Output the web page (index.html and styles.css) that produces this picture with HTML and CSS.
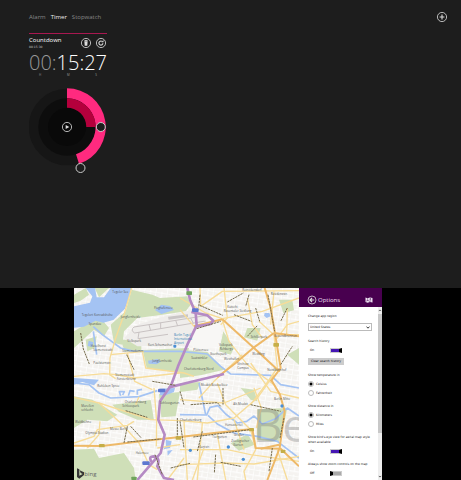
FILE: index.html
```html
<!DOCTYPE html>
<html lang="en">
<head>
  <meta charset="utf-8">
  <title>Timer and Maps</title>
  <link rel="stylesheet" href="styles.css">
</head>
<body>
  <section class="timer">
    <header class="timer__header">
      <nav class="timer__nav">
        <a class="timer__link" href="#alarm">Alarm</a>
        <a class="timer__link timer__link--active" href="#timer">Timer</a>
        <a class="timer__link" href="#stopwatch">Stopwatch</a>
      </nav>
      <button class="round-button" type="button" aria-label="Add timer">
        <svg viewBox="0 0 12 12"><circle cx="6" cy="6" r="4.6"/><path class="thick" d="M6 3.6v4.8M3.6 6h4.8"/></svg>
      </button>
    </header>

    <div class="countdown">
      <div class="countdown__top">
        <div>
          <h1 class="countdown__title">Countdown</h1>
          <div class="countdown__total">00:15:30</div>
        </div>
        <div class="countdown__buttons">
          <button class="round-button" type="button" aria-label="Delete">
            <svg viewBox="0 0 12 12"><circle cx="6" cy="6" r="4.6"/><path class="solid" d="M4.4 4.5h3.2l-.3 4.2H4.7zM4.1 3.6h3.8v.6H4.1zM5.3 3h1.4v.6H5.3z"/></svg>
          </button>
          <button class="round-button" type="button" aria-label="Reset">
            <svg viewBox="0 0 12 12"><circle cx="6" cy="6" r="4.6"/><path class="thick" d="M7.9 6.3A2 2 0 1 1 7 4.4"/><path class="solid" d="M6.3 5.2h2.2V3z"/></svg>
          </button>
        </div>
      </div>
      <div class="countdown__clock"><span class="countdown__dim">00:</span>15:27</div>
      <div class="countdown__units"><span>H</span><span>M</span><span>S</span></div>
      <div class="dial">
        <svg class="dial__rings" viewBox="-38 -39 78 86">
          <circle r="38.3" fill="#161616"/>
          <circle r="28.7" fill="#0d0d0d"/>
          <circle r="19" fill="#090909"/>
          <path d="M0-38.7A38.7 38.7 0 0 1 12 36.8L9 27.2A28.7 28.7 0 0 0 0-28.7Z" fill="#ff2a7f"/>
          <path d="M0-28.7A28.7 28.7 0 0 1 28.7 0H19.3A19.3 19.3 0 0 0 0-19.3Z" fill="#b4003c"/>
          <path d="M12 36.5L13 38.5" stroke="#ddd"/>
          <circle cx="33.8" cy="0" r="4.5" fill="#1d1d1d" stroke="#ccc"/>
          <circle cx="13.5" cy="41" r="4.5" fill="#1d1d1d" stroke="#ccc"/>
        </svg>
        <button class="round-button dial__play" type="button" aria-label="Start">
          <svg viewBox="0 0 12 12"><circle cx="6" cy="6" r="4.6"/><path class="solid" d="M4.7 3.9v4.2L8.3 6z"/></svg>
        </button>
      </div>
    </div>
  </section>

  <section class="maps">
    <svg class="map" viewBox="0 0 675 576" preserveAspectRatio="xMidYMid slice" role="img" aria-label="Map of Berlin">
      <defs>
        <pattern id="streets" width="34" height="30" patternUnits="userSpaceOnUse" patternTransform="rotate(9)">
          <path d="M0 5H34M0 20H34M8 0V30M25 0V20" fill="none" stroke="#fff" stroke-width="3"/>
          <path d="M0 7H34M10 0V30" fill="none" stroke="#ebe9e5"/>
        </pattern>
      </defs>
      <rect width="675" height="576" fill="#f5f3f0"/>
      <rect width="675" height="576" fill="url(#streets)"/>

      <!-- parks and woods -->
      <g fill="#cfdfb8">
        <path d="M173 5L235 20 258 30 340 25 350 50 335 70 255 82 190 90 150 130 145 170 120 165 110 110 155 70Z"/>
        <path d="M0 20L35 0 45 20 20 38 0 45ZM62 0L105 0 75 28ZM25 115L80 90 105 120 90 145 60 125 0 180 0 130Z"/>
        <path d="M35 155L68 145 62 180 40 190ZM140 155h62v35h-50Z"/>
        <path d="M206 186L345 180 325 255 218 240Z"/>
        <path d="M0 325L55 335 130 380 100 400 40 395 0 420Z"/>
        <path d="M115 350L230 336 240 396 190 395 135 372Z"/>
        <path d="M255 318L318 312 305 385 262 388Z"/>
        <path d="M0 485L60 482 75 510 150 495 180 540 185 576 0 576Z"/>
        <path d="M318 185L400 192 450 245 380 262 318 270Z"/>
        <path d="M448 130L480 180 470 200 435 190ZM520 120h40l-10 38-40-10Z"/>
        <path d="M550 364L640 360 632 400 615 462 548 455ZM470 466L520 438 542 470 495 488Z"/>
        <path d="M318 285L380 282 370 305 318 312ZM615 35l40 0 5 32-32 8ZM640 200l35-20v50ZM500 300l40 5 10 35-20-5Z"/>
      </g>
      <path d="M150 150L190 110 260 88 400 55 406 75 372 125 335 175 190 175Z" fill="#efedeb"/>
      <path d="M358 122L444 98 438 175 385 185 345 170Z" fill="#f8f7f5"/>

      <!-- lakes, river and canals -->
      <g fill="#a4c3f3">
        <path d="M35 0H63L68 28 90 28 110 0H172L165 30 153 62 118 96 88 104 65 98 30 116 0 119V55L48 44 55 25Z"/>
        <path d="M243 66L262 50 288 54 300 66 262 78Z"/>
        <path d="M44 158l14 5-4 14-13-3ZM222 218l30-5 8 8-12 8-24-2ZM572 75h14l4 10-12 5-8-7Z"/>
        <path d="M258 302l45-2-3 12-25 10-17 0ZM275 455l18 5-5 20-20 4 8-12ZM280 488l16-2-15 17Z"/>
        <path d="M0 270L75 275 60 292 25 282 0 290Z"/>
      </g>
      <g class="river">
        <path d="M58 116L85 140 140 180 180 190 318 190 400 198 440 235 470 258 590 262 620 290 675 300"/>
        <path d="M0 285L45 290 75 315 110 330 195 326 250 308"/>
        <path d="M140 323l-4-12 15 0-5 10M163 323l5-15 14 2M190 320v-13l14-3"/>
        <path d="M318 380L398 381 408 358 432 353 455 378 490 405 518 400 540 384 565 408 605 392 640 360 675 384"/>
        <path d="M402 382L430 408 480 435 550 445 610 460 675 510"/>
        <path d="M375 285L395 380M58 130L68 200"/>
      </g>

      <!-- runways -->
      <path d="M180 117L400 82M182 135L395 99M180 117q-12 10 2 18M225 110l5 18M260 104v18M305 97l6 17M350 90l8 16M195 132l-3 20 90-13" fill="none" stroke="#c9c3c3" stroke-width="3"/>
      <path d="M282 86l60-7v8l-58 8Z" fill="#cac6c6"/>

      <!-- streets -->
      <g class="road">
        <path d="M173 0L150 80 125 150 108 210 107 260 125 272"/>
        <path d="M0 265L90 257 125 260 180 270 318 255M110 200L210 190M205 190L215 240 330 255 360 265"/>
        <path d="M0 328L75 345 145 410 195 465 225 530 250 545"/>
        <path d="M75 345L230 395 318 398 400 405 480 390 550 330 600 260"/>
        <path d="M0 465L60 445 70 425 160 412 180 400"/>
        <path d="M40 480L75 440 78 400M195 326L185 350M160 195L172 240 182 280 235 305"/>
        <path d="M240 300L248 400 247 475M318 65L360 115M318 30L395 75 445 92 565 70 675 30"/>
        <path d="M378 0L380 55 445 10 675 8M450 0l10 90-20 20M520 30l15 80 30 40M555 100L610 150 640 110 675 100"/>
        <path d="M445 95L465 160 520 230 600 290M505 200L420 280 375 330M530 225L590 310 675 330"/>
        <path d="M600 140L610 240 575 290 530 350M318 335L450 345 560 300M430 285L455 350 530 425"/>
        <path d="M318 485L460 485 530 500 675 520M330 400L340 576M385 405L370 576M430 440L455 576M530 425L545 485 510 550 515 576"/>
        <path d="M318 530L450 525 540 528 675 505M250 480L318 470M280 576L330 510M390 480l-35 96M540 300l22 60-15 60"/>
        <path d="M610 485L640 576M480 395L510 485M600 10l-10 100M640 60l-2 80M610 140h65"/>
      </g>
      <g class="road road--main">
        <path d="M0 473L85 474 200 460 318 447 420 435 535 423 545 480 620 482 675 535"/>
        <path d="M445 94L540 180 605 240 618 250M600 135L540 178 485 225 430 268"/>
        <path d="M572 0L590 60 602 130 620 240 590 280M675 145L600 135M360 115L445 94"/>
        <path d="M592 276L618 320 632 370 617 480 590 550 580 576M560 482l55-12"/>
      </g>

      <!-- motorways -->
      <g class="motorway">
        <path d="M340 0L348 35 365 75 368 112 340 170 312 235 292 290 258 340 253 395 272 440 260 495 230 530 190 576"/>
        <path d="M352 72L400 82 418 98 410 108 368 115"/>
        <path d="M285 298L350 282 450 258M235 525Q220 505 240 505 260 508 250 535L270 570 300 576"/>
      </g>

      <g class="rail">
        <path d="M377 52L446 82M378 20l-4 38M460 42L508 15M480 80L532 100M368 122L440 100M158 200L180 245M20 135l8 48 18 45"/>
        <path d="M545 60l12 40M520 145l30-32M582 20l20 110M620 230L655 175M640 60l-20 40M525 20l-10 35"/>
        <path d="M155 368L220 388M160 415l-10 50M170 415L202 450M160 462L260 453M358 447L535 424M243 500L265 560M290 540L348 526"/>
        <path d="M310 390v60M318 400l12 80M350 350L430 344 440 355M447 300v50M530 350L620 370M385 430L370 490M425 500l-4 55M440 523L500 535M595 480L585 550M630 390l-12 60M235 280l70 12M318 310l12 40"/>
      </g>

      <g class="label">
        <text x="115" y="14">Tegeler See</text>
        <text x="23" y="84">Tegelort Konradshöhe</text>
        <text x="140" y="91">Jungfernheide</text>
        <text x="240" y="64">Flughafensee</text>
        <text x="44" y="112">Spandau</text>
        <text x="50" y="178">Haselhorst</text><text x="58" y="190">Siemensstadt</text>
        <text x="160" y="162">Volkspark</text><text x="222" y="174">Kurt-Schumacher</text>
        <text x="58" y="229">Paulsternstr.</text>
        <text x="145" y="192">Siemensdamm</text>
        <text x="235" y="223">Jungfernheide</text>
        <text x="124" y="263">Siemensstadt</text><text x="128" y="275">Fürstenbrunn</text>
        <text x="70" y="297">Ruhleben Spree</text>
        <text x="152" y="344">Charlottenburg</text><text x="145" y="356">Schlosspark</text>
        <text x="258" y="349">Schlossgarten</text>
        <text x="22" y="356">Murellen</text><text x="22" y="368">schlucht</text>
        <text x="3" y="406">Waldbühne</text>
        <text x="34" y="438">Olympia Stadion</text>
        <text x="108" y="425">Messe Berlin</text>
        <text x="185" y="499">Halensee</text>
        <text x="505" y="9">Reinickendorf</text><text x="590" y="20">Residenzstr.</text>
        <text x="460" y="60">Kutschi</text><text x="449" y="72">Rosentaler Siedlung</text>
        <text x="435" y="174">Volkspark</text><text x="437" y="186">Rehberge</text>
        <text x="530" y="151">Schillerpark</text><text x="600" y="147">Gesundbrunnen</text>
        <text x="358" y="188">Plötzensee</text><text x="408" y="201">Goethepark</text><text x="352" y="214">Saatwinkler</text>
        <text x="330" y="245">Charlottenburg-Nord</text>
        <text x="450" y="216">Westhafen</text><text x="490" y="232">Virchow</text><text x="490" y="244">Campus</text>
        <text x="535" y="201">Wedding</text><text x="580" y="249">Nordbahnhof</text>
        <text x="380" y="293">Moabit Beusselkiez</text><text x="478" y="350">Alt-Moabit</text>
        <text x="318" y="400">Charlottenburg</text><text x="453" y="413">Hansaviertel</text>
        <text x="480" y="443">Großer</text>
        <text x="472" y="463">Zoologischer</text><text x="478" y="475">Garten</text>
        <text x="415" y="451">Tiergarten</text>
        <text x="600" y="336">Berlin Mitte</text><text x="375" y="481">Kantstr.</text>
      </g>
      <g class="label label--blue"><text x="300" y="143">Berlin Tegel</text><text x="300" y="155">International</text><text x="300" y="167">Airport</text></g>
      <g fill="#4b8fd4"><rect x="298" y="170" width="9" height="9" rx="3"/><circle cx="349" cy="487" r="5"/><circle cx="463" cy="477" r="5"/><circle cx="508" cy="514" r="5"/><circle cx="624" cy="354" r="5"/></g>
      <g fill="#5d78d0"><rect x="354" y="61" width="20" height="11" rx="3"/><rect x="252" y="302" width="22" height="11" rx="3"/><rect x="205" y="520" width="22" height="11" rx="3"/></g>
      <g fill="#6fa45c"><rect x="337" y="10" width="17" height="11" rx="2"/><rect x="172" y="566" width="16" height="10" rx="2"/></g>
      <g fill="#c5ae48"><rect x="75" y="468" width="17" height="10" rx="2"/><rect x="305" y="445" width="17" height="10" rx="2"/><rect x="525" y="420" width="15" height="10" rx="2"/><rect x="598" y="165" width="17" height="11" rx="2"/><rect x="620" y="485" width="14" height="10" rx="2"/></g>

      <text class="map__city" x="536" y="461">Be</text>
      <path d="M9 541l7 3v19l10-5-6-3-3-8 13 6v8l-14 11-7-5Z" fill="#333"/>
      <text class="map__bing" x="31" y="563">bing</text>
    </svg>

    <aside class="options">
      <header class="options__header">
        <button class="round-button" type="button" aria-label="Back">
          <svg viewBox="0 0 12 12"><circle cx="6" cy="6" r="4"/><path class="thick" d="M8.2 6H4M6 4L4 6 6 8"/></svg>
        </button>
        <h2 class="options__title">Options</h2>
        <svg class="options__logo" viewBox="0 0 8 6"><path d="M.5.6L2.6 1.2 5 .4 7.5 1V5.6L5 5 2.6 5.7.5 5Z" fill="#eadff0"/><path d="M2.6 1.2V4M1 4.2L3 3.2 4.7 4.6M5.2 2.2V5" fill="none" stroke="#48004f" stroke-width=".4"/><circle cx="5.3" cy="1.9" r=".6" fill="#48004f"/></svg>
      </header>
      <div class="options__main">
        <form class="options__form">
          <div class="group">
            <label class="group__label group__label--select" for="region">Change app region</label>
            <div class="select">
              <select class="select__input" id="region"><option>United States</option></select>
              <svg class="select__arrow" viewBox="0 0 4 3"><path d="M.5.6L2 2.2 3.5.6" fill="none" stroke="#222" stroke-width=".9"/></svg>
            </div>
          </div>
          <div class="group">
            <label class="group__label" for="history">Search history</label>
            <div class="switch"><span class="switch__state">On</span><input class="switch__input" id="history" type="checkbox" checked></div>
            <button class="clear" type="button">Clear search history</button>
          </div>
          <div class="group" role="radiogroup" aria-labelledby="temperature">
            <div class="group__label" id="temperature">Show temperature in</div>
            <label class="radio"><input class="radio__input" type="radio" name="temperature" checked>Celsius</label>
            <label class="radio"><input class="radio__input" type="radio" name="temperature">Fahrenheit</label>
          </div>
          <div class="group" role="radiogroup" aria-labelledby="distance">
            <div class="group__label" id="distance">Show distance in</div>
            <label class="radio"><input class="radio__input" type="radio" name="distance" checked>Kilometers</label>
            <label class="radio"><input class="radio__input" type="radio" name="distance">Miles</label>
          </div>
          <div class="group">
            <label class="group__label" for="birdseye">Show bird's-eye view for aerial map style<br>when available</label>
            <div class="switch"><span class="switch__state">On</span><input class="switch__input" id="birdseye" type="checkbox" checked></div>
          </div>
          <div class="group">
            <label class="group__label" for="zoom">Always show zoom controls on the map</label>
            <div class="switch"><span class="switch__state">Off</span><input class="switch__input" id="zoom" type="checkbox"></div>
          </div>
        </form>
        <div class="scrollbar">
          <svg class="scrollbar__arrow" viewBox="0 0 4 4"><path d="M.8 2.6L2 1.4 3.2 2.6" fill="none" stroke="#444" stroke-width=".8"/></svg>
          <div class="scrollbar__track"><div class="scrollbar__thumb"></div></div>
          <svg class="scrollbar__arrow" viewBox="0 0 4 4"><path d="M.8 1.4L2 2.6 3.2 1.4" fill="none" stroke="#444" stroke-width=".8"/></svg>
        </div>
      </div>
    </aside>
  </section>
</body>
</html>
```

FILE: styles.css
```css
* { box-sizing: border-box; }

body {
  display: grid;
  grid-template-rows: 3fr 2fr;
  min-height: 100vh;
  margin: 0;
  background: #000;
  font-family: "Open Sans", "Noto Sans", sans-serif;
}

h1, h2 {
  margin: 0;
  font-weight: 400;
}

button,
input,
select {
  margin: 0;
  padding: 0;
  border: none;
  border-radius: 0;
  background: none;
  font: inherit;
}

svg { display: block; }

.round-button {
  display: block;
  flex: none;
  width: 12px;
  height: 12px;
  color: #ddd;
}

.round-button svg {
  width: 12px;
  height: 12px;
  fill: none;
  stroke: currentColor;
  stroke-width: 0.8;
}

.round-button .thick { stroke-width: 1.1; }

.round-button .solid {
  fill: currentColor;
  stroke: none;
}

/* Timer */

.timer {
  background: #1d1d1d;
  color: #fff;
  padding: 11px 13px 0 29px;
}

.timer__header {
  display: flex;
  align-items: center;
  justify-content: space-between;
}

.timer__nav {
  display: flex;
  gap: 5px;
  font-size: 6px;
  line-height: 12px;
}

.timer__link {
  color: #888;
  text-decoration: none;
}

.timer__link--active { color: #eee; }

.countdown {
  width: 78px;
  margin-top: 10px;
  border-top: 1px solid #a81850;
}

.countdown__top {
  display: flex;
  justify-content: space-between;
  padding-top: 2px;
}

.countdown__title {
  font-size: 6px;
  line-height: 8px;
}

.countdown__total {
  font-family: "DejaVu Sans", sans-serif;
  font-size: 3px;
  line-height: 6px;
  color: #ccc;
}

.countdown__buttons {
  display: flex;
  gap: 3px;
  padding-top: 1px;
}

.countdown__clock {
  padding-top: 3px;
  font-size: 20px;
  font-weight: 300;
  line-height: 20px;
  white-space: nowrap;
}

.countdown__dim { color: #999; }

.countdown__units {
  display: flex;
  justify-content: space-between;
  padding: 0 10px;
  font-size: 3px;
  line-height: 4px;
  color: #999;
}

.dial {
  position: relative;
  margin-top: 11px;
}

.dial__rings {
  width: 78px;
  height: 86px;
}

.dial__play {
  position: absolute;
  top: 33px;
  left: 32px;
}

/* Maps */

.maps {
  display: flex;
  padding: 0 79px 0 74px;
}

.map {
  flex: 1;
  min-width: 0;
  height: 100%;
}

.river {
  fill: none;
  stroke: #a4c3f3;
  stroke-width: 5;
  stroke-linejoin: round;
}

.road {
  fill: none;
  stroke: #f7dc98;
  stroke-width: 4;
  stroke-linejoin: round;
}

.road--main {
  stroke: #eeb968;
  stroke-width: 6;
}

.motorway {
  fill: none;
  stroke: #b58ac4;
  stroke-width: 8;
  stroke-linejoin: round;
}

.rail {
  fill: none;
  stroke: #756b4c;
  stroke-width: 3;
  stroke-dasharray: 7 2;
}

.label {
  font-size: 9px;
  fill: #555;
}

.label--blue { fill: #2a78b0; }

.map__city {
  font-size: 138px;
  fill: #777;
  fill-opacity: 0.35;
}

.map__bing {
  font-size: 18px;
  fill: #666;
}

.options {
  display: flex;
  flex-direction: column;
  width: 83px;
  background: #fff;
  color: #222;
  font-family: "DejaVu Sans", sans-serif;
  font-size: 3px;
  line-height: 5px;
}

.options__header {
  display: flex;
  align-items: center;
  height: 19px;
  padding: 4px 9px 0 7px;
  background: #48004f;
  color: #eadff0;
}

.options__title {
  flex: 1;
  font-family: "Open Sans", "Noto Sans", sans-serif;
  font-size: 6px;
  line-height: 10px;
}

.options__logo {
  width: 8px;
  height: 6px;
}

.options__main {
  display: flex;
  flex: 1;
}

.options__form {
  display: flex;
  flex: 1;
  flex-direction: column;
  gap: 8px;
  padding: 7px 0 4px 9px;
}

.group__label {
  display: block;
  margin-bottom: 3px;
  white-space: nowrap;
}

.group__label--select { margin-bottom: 4px; }

.select {
  position: relative;
  width: 64px;
  height: 8px;
}

.select__input {
  display: block;
  width: 100%;
  height: 100%;
  padding-left: 1px;
  border: 1px solid #bbb;
  appearance: none;
  color: #222;
}

.select__arrow {
  position: absolute;
  top: 3px;
  right: 2px;
  width: 4px;
  height: 3px;
  pointer-events: none;
}

.switch {
  display: flex;
  align-items: center;
  height: 6px;
  padding-left: 2px;
}

.switch__state { width: 20px; }

.switch__input {
  width: 12px;
  height: 5px;
  border: 1px solid #ccc;
  border-left: 3px solid #000;
  background: #aaa;
  appearance: none;
}

.switch__input:checked {
  border-left: 1px solid #ccc;
  border-right: 3px solid #000;
  background: #4617b4;
}

.clear {
  display: block;
  height: 7px;
  margin-top: 5px;
  padding: 0 3px;
  background: #ccc;
  color: #111;
  line-height: 7px;
  white-space: nowrap;
}

.radio {
  display: flex;
  align-items: center;
  gap: 2px;
  height: 6px;
}

.radio + .radio { margin-top: 3px; }

.radio__input {
  width: 6px;
  height: 6px;
  border: 1px solid #bbb;
  border-radius: 50%;
  appearance: none;
}

.radio__input:checked { background: radial-gradient(#000 50%, #fff 60%); }

.scrollbar {
  display: flex;
  flex-direction: column;
  width: 4px;
  background: #eee;
}

.scrollbar__arrow {
  width: 4px;
  height: 7px;
}

.scrollbar__track { flex: 1; }

.scrollbar__thumb {
  height: 75%;
  background: #c8c8c8;
}
```
